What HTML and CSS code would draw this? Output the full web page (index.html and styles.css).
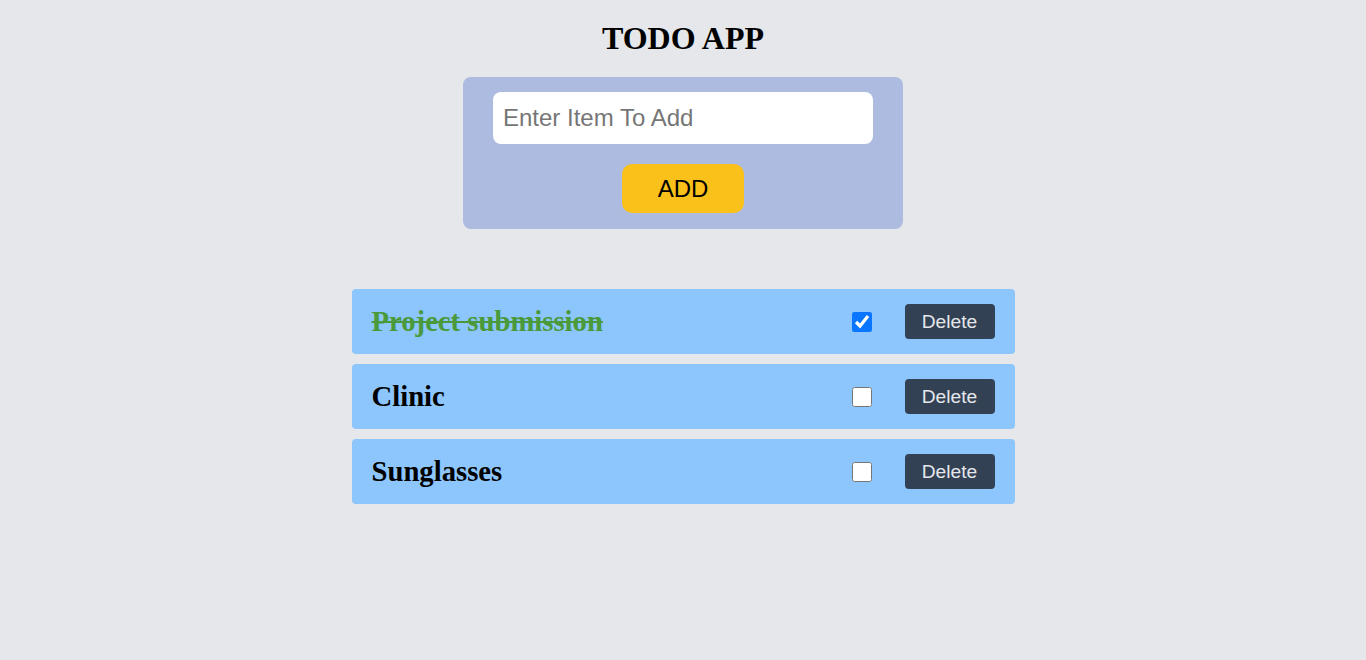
FILE: index.html
```html
<!DOCTYPE html>
<html>
<head>
<meta charset="utf-8">
<link rel="stylesheet" href="styles.css">
</head>
<body>
<div class="app">
  <h1 class="title">TODO APP</h1>
  <form class="add-form" onsubmit="return false">
    <input class="add-input" type="text" placeholder="Enter Item To Add">
    <button class="add-btn" type="button">ADD</button>
  </form>
  <ul class="list">
    <li class="item">
      <span class="item-text done">Project submission</span>
      <input class="check" type="checkbox" checked>
      <button class="del-btn">Delete</button>
    </li>
    <li class="item">
      <span class="item-text">Clinic</span>
      <input class="check" type="checkbox">
      <button class="del-btn">Delete</button>
    </li>
    <li class="item">
      <span class="item-text">Sunglasses</span>
      <input class="check" type="checkbox">
      <button class="del-btn">Delete</button>
    </li>
  </ul>
</div>
</body>
</html>
```
FILE: styles.css
```css
html, body {
  margin: 0;
  padding: 0;
  background: #e5e7eb;
  height: 100%;
}
.app {
  display: flex;
  flex-direction: column;
  align-items: center;
  font-family: "Liberation Serif", "Times New Roman", serif;
}
.title {
  margin: 20px 0 0;
  font-size: 32px;
  line-height: 37px;
  font-weight: bold;
  color: #000;
}
.add-form {
  margin-top: 20px;
  width: 440px;
  box-sizing: border-box;
  padding: 15px 30px 16px;
  background: #adbbe0;
  border-radius: 8px;
  display: flex;
  flex-direction: column;
  align-items: center;
  gap: 20px;
}
.add-input {
  width: 100%;
  height: 52px;
  box-sizing: border-box;
  border: none;
  outline: none;
  border-radius: 8px;
  background: #fff;
  padding: 0 10px;
  font-family: "Liberation Sans", Arial, sans-serif;
  font-size: 24px;
  color: #000;
}
.add-input::placeholder {
  color: #767676;
}
.add-btn {
  width: 122px;
  height: 49px;
  border: none;
  border-radius: 10px;
  background: #fbc11b;
  font-family: "Liberation Sans", Arial, sans-serif;
  font-size: 24px;
  color: #000;
  padding: 0;
}
.list {
  list-style: none;
  margin: 60px 0 0;
  padding: 0;
  width: 663px;
  display: flex;
  flex-direction: column;
  gap: 10px;
}
.item {
  height: 65px;
  box-sizing: border-box;
  background: #8cc6fd;
  border-radius: 4px;
  display: flex;
  align-items: center;
  padding: 0 20px;
}
.item-text {
  flex: 1;
  font-size: 28.7px;
  font-weight: bold;
  color: #000;
}
.item-text.done {
  color: #4a993a;
  text-decoration: line-through;
}
.check {
  width: 20px;
  height: 20px;
  margin: 0 33px 0 0;
  accent-color: #0a75ff;
}
.del-btn {
  width: 90px;
  height: 35px;
  border: none;
  border-radius: 4px;
  background: #334155;
  color: #e5e7eb;
  font-family: "Liberation Sans", Arial, sans-serif;
  font-size: 19.2px;
  padding: 0;
}
```
